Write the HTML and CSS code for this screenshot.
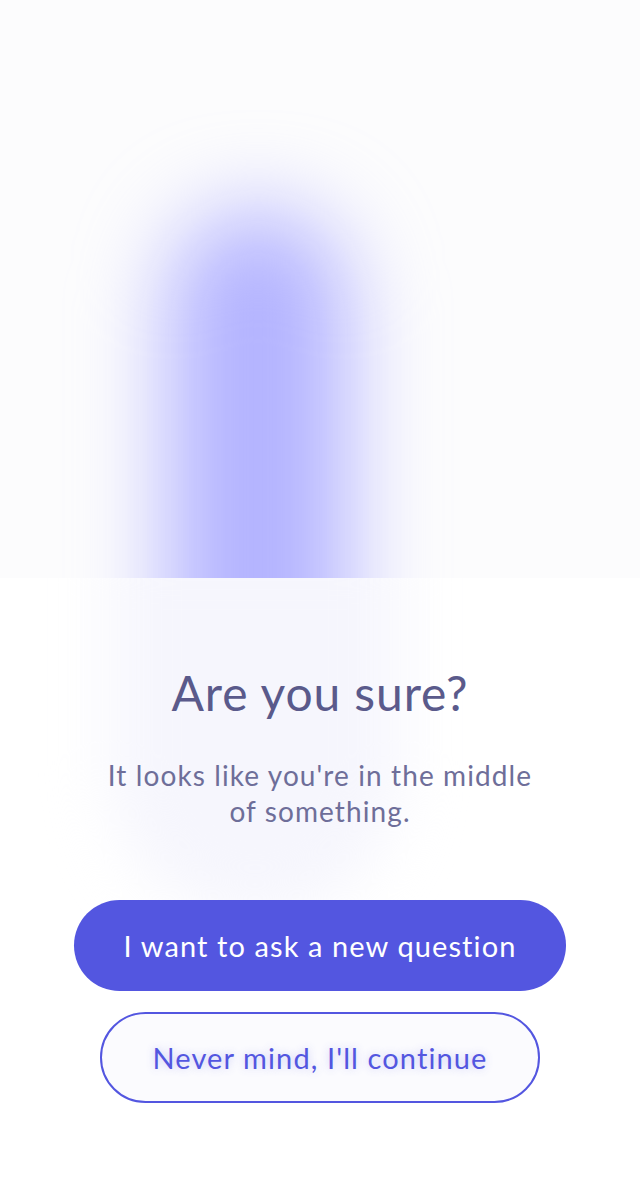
FILE: index.html
```html
<!DOCTYPE html>
<html lang="en">
<head>
<meta charset="utf-8">
<title>Are you sure?</title>
<link rel="stylesheet" href="styles.css">
</head>
<body>
<div class="page">
  <div class="backdrop" aria-hidden="true">
    <div class="blob"></div>
  </div>
  <div class="lower">
    <div class="glow" aria-hidden="true"></div>
    <section class="sheet">
      <h1 class="title">Are you sure?</h1>
      <p class="text">It looks like you're in the middle<br>of something.</p>
      <div class="actions">
        <button class="btn btn-primary">I want to ask a new question</button>
        <button class="btn btn-secondary">Never mind, I'll continue</button>
      </div>
    </section>
  </div>
</div>
</body>
</html>
```

FILE: styles.css
```css
* { box-sizing: border-box; }

html, body {
  margin: 0;
  padding: 0;
  background: #ffffff;
}

body {
  font-family: Lato, "Open Sans", "Liberation Sans", sans-serif;
  width: 640px;
  height: 1200px;
  overflow: hidden;
}

.page {
  display: flex;
  flex-direction: column;
  height: 1200px;
}

.backdrop {
  position: relative;
  height: 578px;
  background: #fcfcfd;
  flex: none;
  z-index: 0;
}

.blob {
  position: absolute;
  left: 168px;
  top: 210px;
  width: 180px;
  height: 700px;
  border-radius: 90px 90px 0 0;
  background: #b3b3ff;
  filter: blur(44px);
}

.lower {
  position: relative;
  z-index: 1;
  flex: 1;
  background: #ffffff;
  overflow: hidden;
}

.glow {
  position: absolute;
  left: 110px;
  top: -40px;
  width: 290px;
  height: 380px;
  border-radius: 0 0 145px 145px;
  background: #f6f6fd;
  filter: blur(30px);
}

.sheet {
  position: relative;
  display: flex;
  flex-direction: column;
  align-items: center;
  padding-top: 86px;
}

.title {
  margin: 0;
  font-size: 48px;
  line-height: 57px;
  font-weight: 400;
  color: #5a5a8b;
  letter-spacing: 0.9px;
}

.text {
  margin: 36px 0 0;
  font-size: 28px;
  line-height: 36px;
  font-weight: 400;
  color: #6e6e99;
  text-align: center;
  letter-spacing: 1.1px;
}

.actions {
  margin-top: 71px;
  display: flex;
  flex-direction: column;
  align-items: center;
  gap: 21px;
}

.btn {
  font-family: inherit;
  font-size: 29px;
  font-weight: 400;
  height: 91px;
  border-radius: 46px;
  cursor: pointer;
  letter-spacing: 1.1px;
}

.btn-primary {
  width: 492px;
  border: none;
  background: #5356e0;
  color: #ffffff;
}

.btn-secondary {
  width: 440px;
  border: 2px solid #5356e0;
  background: #fbfbfe;
  color: #5356e0;
  text-shadow: 0 0 8px rgba(83, 86, 224, 0.3);
}
```
